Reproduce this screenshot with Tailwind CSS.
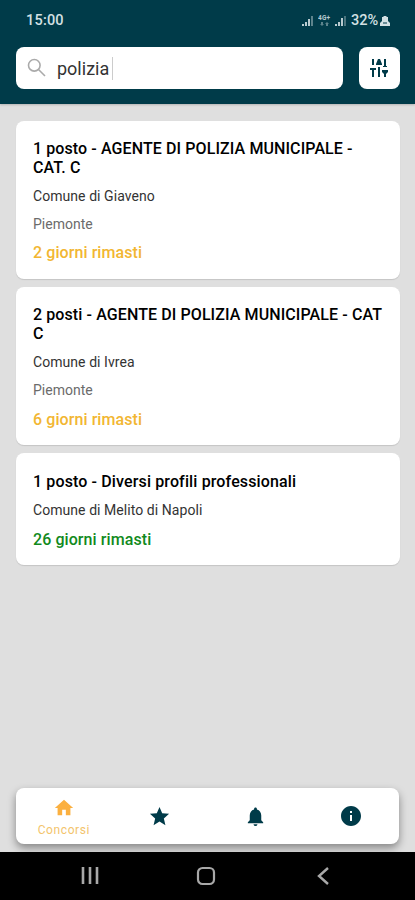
<!DOCTYPE html>
<html lang="it">
<head>
    <meta charset="UTF-8" />
    <meta name="viewport" content="width=device-width, initial-scale=1.0"/>
    <title>Concorsi</title>
    <script src="https://cdn.jsdelivr.net/npm/@tailwindcss/browser@4"></script>
    <style>
        body {
            font-family: Roboto, 'Liberation Sans', sans-serif;
        }
    </style>
</head>
<body class="flex flex-col h-[900px] w-[415px] overflow-hidden bg-[#dfdfdf] text-black">
    <header class="h-[104px] shrink-0 bg-[#003b49] px-4 shadow-[0_1px_2px_rgba(0,0,0,0.2)]">
        <!-- Status bar -->
        <div class="flex h-[47px] items-center justify-between pl-[10px] pr-[9px] pb-[6px] text-[14.5px] font-medium text-[#d3e0e3]">
            <span class="whitespace-nowrap tracking-[0.2px]">15:00</span>
            <div class="flex items-center">
                <svg class="w-[11px] h-[11px]" viewBox="0 0 11 11" fill="#b9cbd0"><path d="M0 11V9h2v2zM3 11V7h2v4zM6 11V4h2v7z"/><path d="M9 11V1h2v10z" opacity=".5"/></svg>
                <svg class="ml-[5px] w-[13px] h-[13px]" viewBox="0 0 13 13" fill="#b9cbd0"><text x="0" y="6" font-size="6.5" font-weight="700" textLength="12">4G+</text><path d="M3 8h2v2h1l-2 2-2-2h1zM8 12v-2H7l2-2 2 2h-1v2z" opacity=".5"/></svg>
                <svg class="ml-[4px] w-[11px] h-[11px]" viewBox="0 0 11 11" fill="#b9cbd0"><path d="M0 11V9h2v2zM3 11V7h2v4zM6 11V3h2v8z"/><path d="M9 11V1h2v10z" opacity=".4"/></svg>
                <span class="ml-[5px] w-[28px] whitespace-nowrap">32%</span>
                <svg class="ml-[1px] w-[10px] h-[12px]" viewBox="0 0 10 12" fill="#d3e0e3"><path d="M3.500 1h3v1H8v4l2 2v3H0V8l2-2V2h1.500z"/><path d="M3 7.500h4v1H3z" fill="#003b49"/></svg>
            </div>
        </div>
        <!-- Search -->
        <div class="flex gap-4">
            <div class="flex h-[42px] w-[327px] shrink-0 items-center rounded-lg bg-white pl-[11px]">
                <svg class="h-[20px] w-[20px]" viewBox="0 0 20 20" fill="none" stroke="#aaaaaa" stroke-width="1.6"><circle cx="7.3" cy="7.3" r="5.8"/><path d="M11.5 11.5l6.500 6.500"/></svg>
                <span class="ml-[10px] text-[18px] text-[#333]">polizia</span>
                <span class="ml-[3px] h-[23px] w-px bg-[#ccc]"></span>
            </div>
            <button class="flex h-[42px] w-[41px] shrink-0 items-center justify-center rounded-lg bg-white pr-[2px]">
                <svg class="h-[20px] w-[20px]" viewBox="0 0 20 20" fill="#003b49"><path d="M3 1h2v6H3zM9 1h2l2 5v1H7V6zM15 1h2v7h1v1h-4V8h1zM1 10h6v2H5v7H3v-7H1zM9 9h2v10H9zM13 12h6v2l-2 2v3h-2v-3l-2-2z"/></svg>
            </button>
        </div>
    </header>

    <!-- Results -->
    <main class="flex grow flex-col gap-2 pl-4 pt-[16.5px] pr-[15.500px]">
        <article class="h-[158.5px] rounded-lg bg-white px-[17px] pt-[18.5px] shadow-[0_1px_1px_rgba(0,0,0,0.12)]">
            <h2 class="text-[16px] leading-[19px] font-medium tracking-[0.1px] whitespace-nowrap">1 posto - AGENTE DI POLIZIA MUNICIPALE -<br>CAT. C</h2>
            <p class="mt-[10px] text-[14px] leading-[19px] tracking-[0.06px] text-[#333]">Comune di Giaveno</p>
            <p class="mt-[9px] text-[14px] leading-[19px] text-[#6b6b6b]">Piemonte</p>
            <p class="mt-[9px] text-[16px] leading-[19px] font-medium tracking-[0.08px] text-[#f2b632]">2 giorni rimasti</p>
        </article>
        <article class="h-[158px] rounded-lg bg-white px-[17px] pt-[18px] shadow-[0_1px_1px_rgba(0,0,0,0.12)]">
            <h2 class="text-[16px] leading-[19px] font-medium tracking-[0.1px] whitespace-nowrap">2 posti - AGENTE DI POLIZIA MUNICIPALE - CAT<br>C</h2>
            <p class="mt-[10px] text-[14px] leading-[19px] tracking-[0.06px] text-[#333]">Comune di Ivrea</p>
            <p class="mt-[9px] text-[14px] leading-[19px] text-[#6b6b6b]">Piemonte</p>
            <p class="mt-[10px] text-[16px] leading-[19px] font-medium tracking-[0.08px] text-[#f2b632]">6 giorni rimasti</p>
        </article>
        <article class="h-[111.500px] rounded-lg bg-white px-[17px] pt-[19px] shadow-[0_1px_1px_rgba(0,0,0,0.12)]">
            <h2 class="text-[16px] leading-[19px] font-medium tracking-[0.13px] whitespace-nowrap">1 posto - Diversi profili professionali</h2>
            <p class="mt-[10px] text-[14px] leading-[19px] tracking-[0.06px] text-[#333]">Comune di Melito di Napoli</p>
            <p class="mt-[10px] text-[16px] leading-[19px] font-medium tracking-[0.08px] text-[#118a1c]">26 giorni rimasti</p>
        </article>
    </main>

    <!-- Tab bar -->
    <nav class="mx-4 mb-2 grid h-[56px] w-[383px] shrink-0 grid-cols-4 items-center rounded-lg bg-white text-[#003b49] shadow-[0_4px_8px_rgba(0,0,0,0.4)]">
        <div class="flex flex-col items-center pt-[2px] text-[#fbb040]">
            <svg class="h-[22px] w-[22px]" viewBox="0 0 24 24" fill="currentColor"><path d="M10 20v-6h4v6h5v-8h3L12 3 2 12h3v8z"/></svg>
            <span class="mt-[3px] text-[12px] leading-[16px] tracking-[0.6px] text-[#f3c46c]">Concorsi</span>
        </div>
        <svg class="h-[23px] w-[23px] justify-self-center" viewBox="0 0 24 24" fill="currentColor"><path d="M12 17.27L18.18 21l-1.64-7.03L22 9.24l-7.19-.61L12 2 9.19 8.63 2 9.24l5.46 4.73L5.82 21z"/></svg>
        <svg class="h-[23px] w-[23px] justify-self-center" viewBox="0 0 24 24" fill="currentColor"><path d="M12 22c1.1 0 2-.9 2-2h-4c0 1.1.9 2 2 2zm6-6v-5c0-3.07-1.64-5.64-4.5-6.32V4c0-.83-.67-1.5-1.5-1.5s-1.5.67-1.5 1.5v.68C7.63 5.36 6 7.92 6 11v5l-2 2v1h16v-1z"/></svg>
        <svg class="h-[24px] w-[24px] justify-self-center" viewBox="0 0 24 24" fill="currentColor"><path d="M12 2C6.480 2 2 6.480 2 12s4.480 10 10 10 10-4.480 10-10S17.520 2 12 2zm1 15h-2v-6h2zm0-8h-2V7h2z"/></svg>
    </nav>

    <!-- Android navigation -->
    <footer class="z-10 flex h-[48px] shrink-0 items-center bg-black text-[#a8a8a8]">
        <svg class="ml-[80px] h-[20px] w-[20px]" viewBox="0 0 20 20" fill="none" stroke="currentColor" stroke-width="2.6"><path d="M3 1v17M10 1v17M17 1v17"/></svg>
        <svg class="ml-[96px] h-[20px] w-[20px]" viewBox="0 0 20 20" fill="none" stroke="currentColor" stroke-width="2.2"><rect x="2" y="2" width="16" height="16" rx="4.500"/></svg>
        <svg class="ml-[97px] h-[20px] w-[20px]" viewBox="0 0 20 20" fill="none" stroke="currentColor" stroke-width="2.400"><path d="M15 2l-9 8 9 8"/></svg>
    </footer>
</body>
</html>
